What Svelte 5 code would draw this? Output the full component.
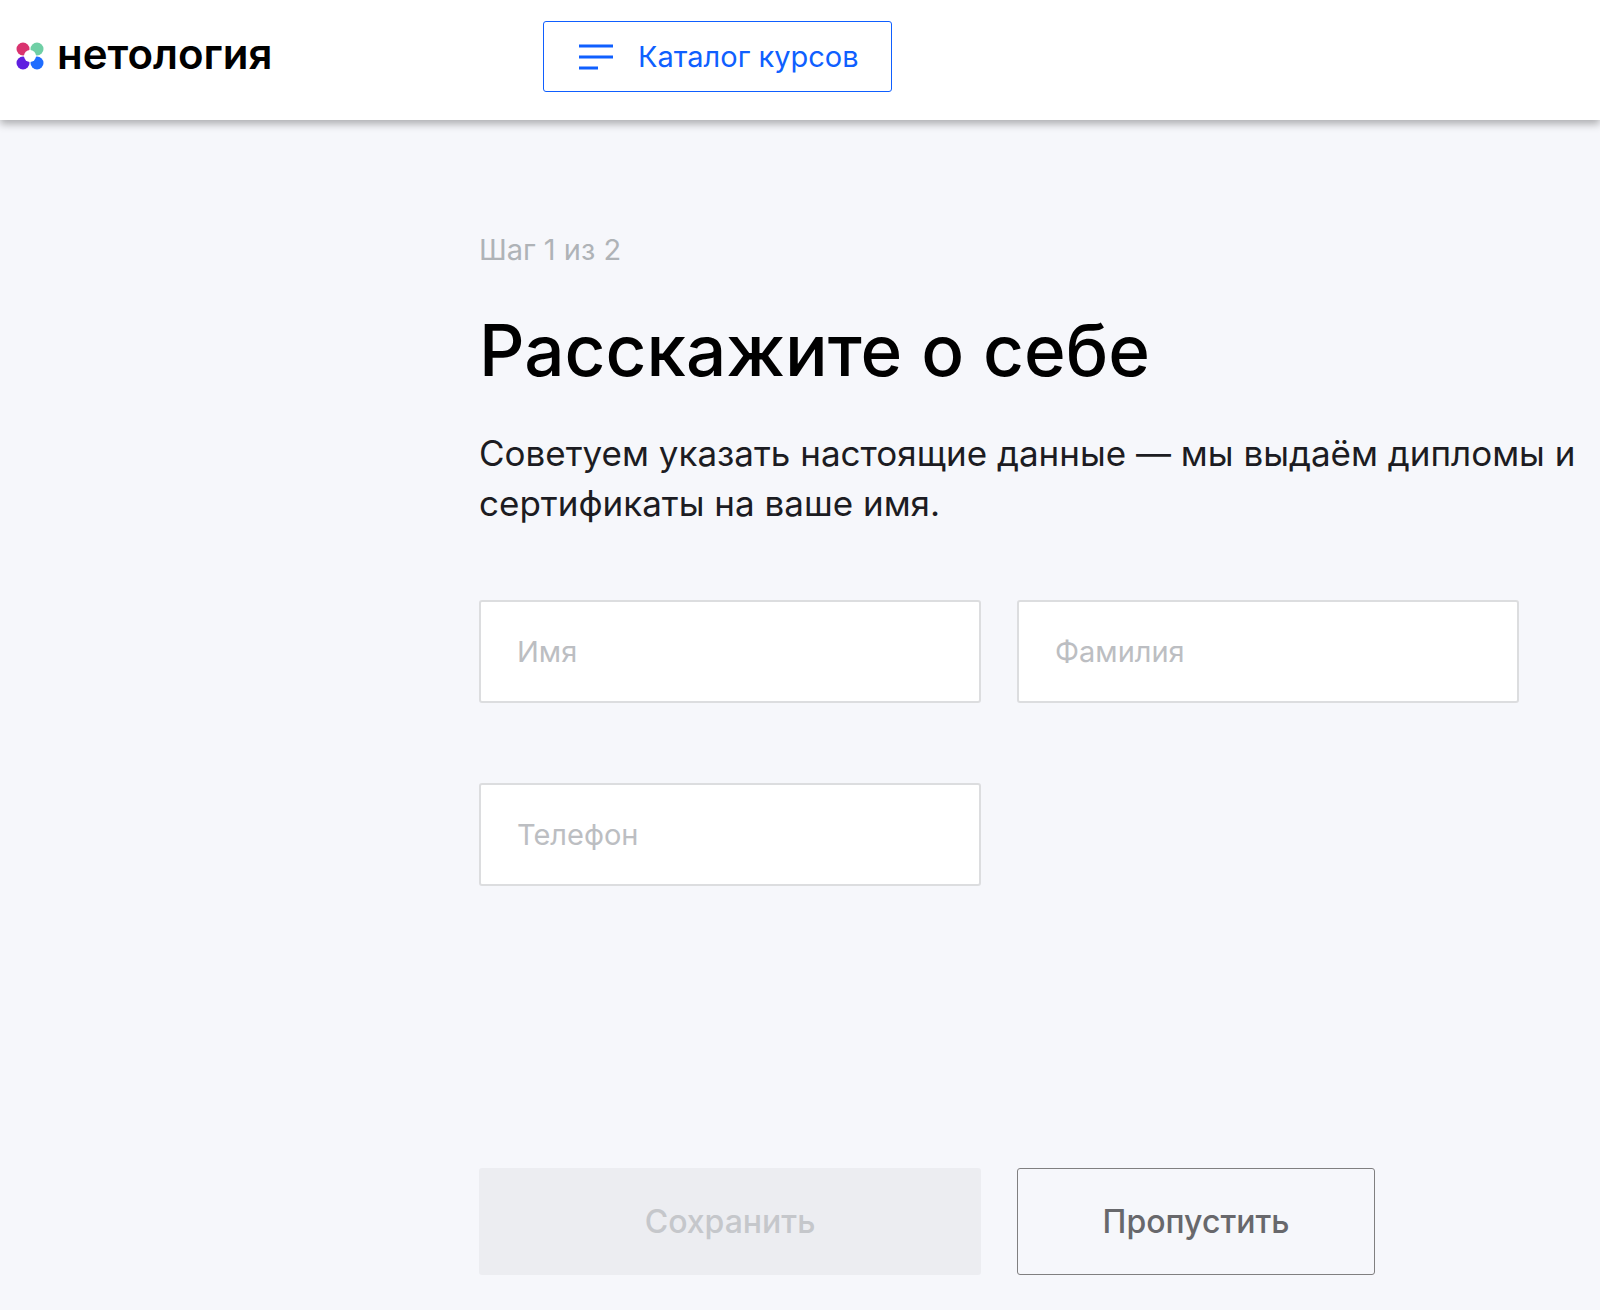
<script>
  const fields = [["Имя", "Фамилия"], ["Телефон"]];
</script>

<div class="page">
  <header class="top">
    <div class="logo">
      <svg class="mark" viewBox="0 0 28 28" width="28" height="28" aria-hidden="true">
        <circle cx="7" cy="7" r="6.5" fill="#d9336f" />
        <circle cx="21" cy="7" r="6.5" fill="#6fcfa5" />
        <circle cx="7" cy="21" r="6.5" fill="#5f1fe0" />
        <circle cx="21" cy="21" r="6.5" fill="#1f6dff" />
        <circle cx="14" cy="14" r="6" fill="#fff" />
      </svg>
      <span class="word">нетология</span>
    </div>
    <button class="catalog">
      <svg viewBox="0 0 34 26" width="34" height="26" aria-hidden="true">
        <path d="M0 2h34M0 13h34M0 24h19" stroke="#0f5fff" stroke-width="3" fill="none" />
      </svg>
      <span>Каталог курсов</span>
    </button>
  </header>

  <main class="content">
    <p class="step">Шаг 1 из 2</p>
    <h1>Расскажите о себе</h1>
    <p class="lead">Советуем указать настоящие данные — мы выдаём дипломы и сертификаты на ваше имя.</p>

    <div class="form">
      {#each fields as row}
        <div class="row">
          {#each row as f}
            <input class="field" placeholder={f} />
          {/each}
        </div>
      {/each}
    </div>

    <div class="actions">
      <button class="save">Сохранить</button>
      <button class="skip">Пропустить</button>
    </div>
  </main>
</div>

<style>
  :global(body) {
    margin: 0;
    background: #f6f7fb;
  }
  .page {
    height: 1310px;
    overflow: hidden;
    font-family: Inter, "Noto Sans", sans-serif;
  }
  .top {
    height: 120px;
    box-sizing: border-box;
    background: #fff;
    box-shadow: 0 4px 8px rgba(0, 0, 0, 0.3);
    display: flex;
    align-items: flex-start;
    padding: 21px 0 0 16px;
  }
  .logo {
    display: flex;
    align-items: center;
    width: 527px;
    height: 70px;
  }
  .mark {
    flex: none;
  }
  .word {
    margin-left: 13px;
    font-size: 42px;
    font-weight: 600;
    color: #000;
    line-height: 1;
    position: relative;
    top: -2px;
  }
  .catalog {
    width: 349px;
    height: 71px;
    box-sizing: border-box;
    background: #fff;
    border: 1px solid #0f5fff;
    border-radius: 3px;
    display: flex;
    align-items: center;
    padding: 0 0 0 35px;
    gap: 25px;
    color: #0f5fff;
    font: 400 29px Inter, sans-serif;
  }
  .content {
    padding: 114px 0 0 479px;
  }
  .step {
    margin: 0;
    font-size: 29px;
    line-height: 32px;
    color: #afb3b7;
  }
  h1 {
    margin: 42px 0 0;
    font-size: 71px;
    font-weight: 500;
    line-height: 84px;
    color: #000;
  }
  .lead {
    margin: 36px 0 0;
    width: 1110px;
    font-size: 35px;
    line-height: 50px;
    color: #1c1c22;
  }
  .form {
    margin-top: 72px;
    display: flex;
    flex-direction: column;
    gap: 80px;
  }
  .row {
    display: flex;
    gap: 36px;
  }
  .field {
    width: 502px;
    height: 103px;
    box-sizing: border-box;
    padding: 0 36px;
    background: #fff;
    border: 2px solid #dcdddf;
    border-radius: 3px;
    font: 400 29px Inter, sans-serif;
  }
  .field::placeholder {
    color: #bcbec2;
    opacity: 1;
  }
  .actions {
    margin-top: 282px;
    display: flex;
    gap: 36px;
  }
  .actions button {
    height: 107px;
    box-sizing: border-box;
    border-radius: 3px;
    font: 500 32px Inter, sans-serif;
  }
  .save {
    width: 502px;
    background: #ecedf1;
    border: 0;
    color: #c5c7cb;
  }
  .skip {
    width: 358px;
    background: transparent;
    border: 1px solid #807f80;
    color: #68686c;
  }
</style>
